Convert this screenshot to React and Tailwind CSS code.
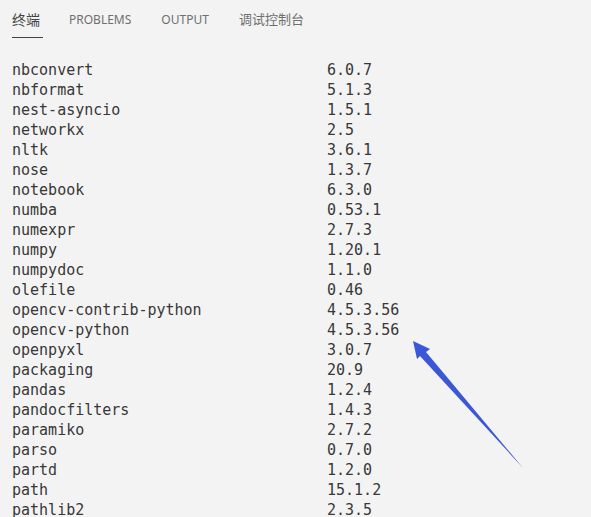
const packages = [
  ["nbconvert", "6.0.7"],
  ["nbformat", "5.1.3"],
  ["nest-asyncio", "1.5.1"],
  ["networkx", "2.5"],
  ["nltk", "3.6.1"],
  ["nose", "1.3.7"],
  ["notebook", "6.3.0"],
  ["numba", "0.53.1"],
  ["numexpr", "2.7.3"],
  ["numpy", "1.20.1"],
  ["numpydoc", "1.1.0"],
  ["olefile", "0.46"],
  ["opencv-contrib-python", "4.5.3.56"],
  ["opencv-python", "4.5.3.56"],
  ["openpyxl", "3.0.7"],
  ["packaging", "20.9"],
  ["pandas", "1.2.4"],
  ["pandocfilters", "1.4.3"],
  ["paramiko", "2.7.2"],
  ["parso", "0.7.0"],
  ["partd", "1.2.0"],
  ["path", "15.1.2"],
  ["pathlib2", "2.3.5"],
];

export default function App() {
  return (
    <div
      className="relative w-[591px] h-[517px] overflow-hidden bg-[#f3f3f3]"
      style={{ fontFamily: '"Noto Sans", "Noto Sans CJK SC", sans-serif' }}
    >
      <div className="flex h-[38px] pl-3 text-[12px] text-[#6f6f6f]">
        <div className="flex items-center h-full w-[31px] border-b border-[#424242] text-[#424242] text-[14px]">
          <span className="mt-[1px]">终端</span>
        </div>
        <div className="flex items-center h-full ml-[26px]">
          <span className="mt-[1px]">PROBLEMS</span>
        </div>
        <div className="flex items-center h-full ml-[30px]">
          <span className="mt-[1px]">OUTPUT</span>
        </div>
        <div className="flex items-center h-full ml-[30px] text-[13px]">
          <span className="mt-[1px]">调试控制台</span>
        </div>
      </div>

      <div
        className="pt-[22px] pl-3 text-[15px] leading-[20px] text-[#383838]"
        style={{ fontFamily: '"DejaVu Sans Mono", monospace' }}
      >
        {packages.map(([name, ver]) => (
          <div key={name} className="flex whitespace-pre">
            <span className="w-[315px]">{name}</span>
            <span>{ver}</span>
          </div>
        ))}
      </div>

      <svg
        className="absolute left-0 top-0 pointer-events-none"
        width="591"
        height="517"
        viewBox="0 0 591 517"
      >
        <polygon
          points="413,341 430,349 426,352 523,468 420,356 417,359"
          fill="#3a57d8"
        />
      </svg>
    </div>
  );
}
